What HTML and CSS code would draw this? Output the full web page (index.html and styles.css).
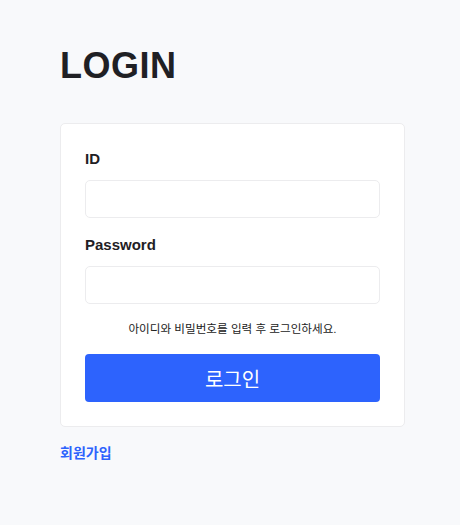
FILE: index.html
```html
<!DOCTYPE html>
<html lang="ko">
<head>
  <meta charset="UTF-8">
  <meta name="viewport" content="width=device-width, initial-scale=1.0">
  <title>LOGIN</title>
  <link rel="stylesheet" href="styles.css">
</head>
<body>
  <div class="wrap">
    <h1 class="title">LOGIN</h1>
    <form class="card" onsubmit="return false">
      <label class="label" for="userId">ID</label>
      <input class="field" type="text" id="userId">
      <label class="label" for="userPw">Password</label>
      <input class="field" type="password" id="userPw">
      <p class="hint">아이디와 비밀번호를 입력 후 로그인하세요.</p>
      <button class="btn" type="submit">로그인</button>
    </form>
    <a class="join" href="#">회원가입</a>
  </div>
</body>
</html>
```

FILE: styles.css
```css
body {
  margin: 0;
  background-color: #f8f9fb;
  color: #222;
  font-family: 'Liberation Sans', 'Noto Sans CJK KR', sans-serif;
}
.wrap {
  width: 345px;
  padding: 44px 0 40px 60px;
}
.title {
  margin: 0 0 35px;
  font-size: 36px;
  line-height: 44px;
  font-weight: bold;
  color: #1f2024;
  letter-spacing: 0.5px;
}
.card {
  display: flex;
  flex-direction: column;
  background-color: #fff;
  border: 1px solid #ececee;
  border-radius: 5px;
  padding: 24px;
}
.label {
  font-size: 15px;
  font-weight: bold;
  line-height: 22px;
  margin: 0 0 10px;
  color: #1f2024;
}
.field {
  height: 38px;
  box-sizing: border-box;
  border: 1px solid #ececee;
  border-radius: 5px;
  margin-bottom: 16px;
  padding: 0 10px;
  font-size: 14px;
}
.hint {
  margin: 0 0 16px;
  text-align: center;
  font-size: 11.6px;
  line-height: 18px;
  color: #222;
}
.btn {
  height: 48px;
  border: none;
  border-radius: 4px;
  background-color: #2d63fd;
  color: #fff;
  font-family: 'Noto Sans CJK KR', sans-serif;
  font-size: 20px;
  cursor: pointer;
}
.join {
  display: inline-block;
  margin-top: 15px;
  font-family: 'Noto Sans CJK KR', sans-serif;
  font-size: 14px;
  font-weight: bold;
  color: #2d63fd;
  text-decoration: none;
}
```
